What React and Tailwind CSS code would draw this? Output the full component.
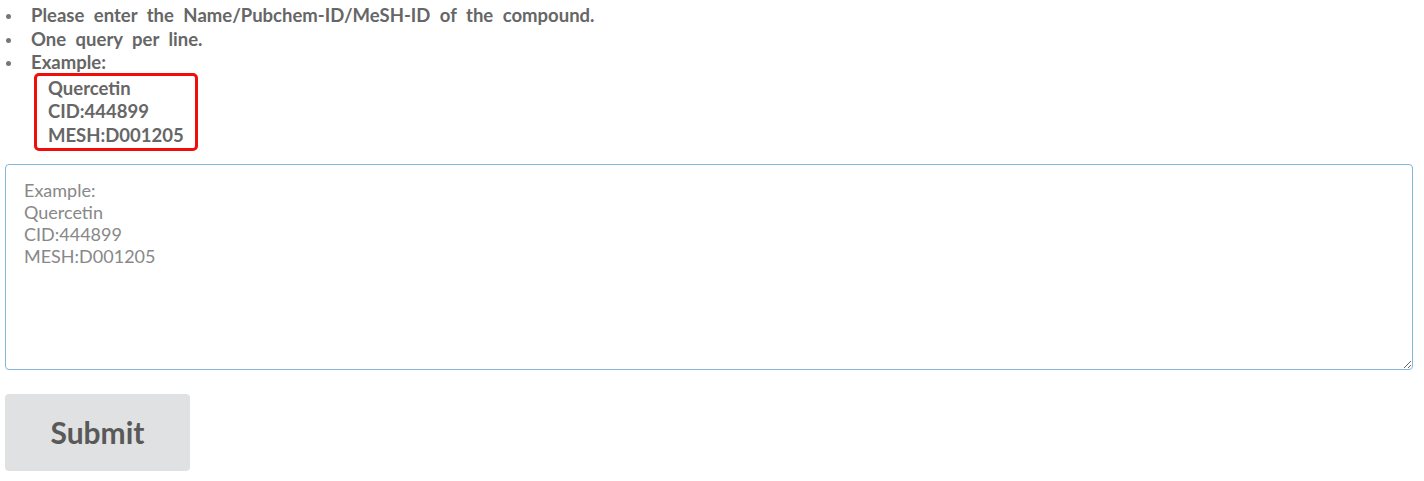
import React from "react";

const Bullet = ({ children }) => (
  <li className="flex">
    <span className="mr-[20px] mt-[10px] h-[5px] w-[5px] shrink-0 rounded-full bg-[#777]" />
    <div>{children}</div>
  </li>
);

const App = () => {
  return (
    <div className="min-h-screen bg-white pl-[5px] pr-[11px] font-['Lato','Liberation_Sans',sans-serif]">
      {/* Instructions */}
      <ul className="pl-[1px] pt-[4px] text-[18.5px] font-bold leading-[23.5px] text-[#666]">
        <Bullet>
          <span className="[word-spacing:5px]">Please enter the Name/Pubchem-ID/MeSH-ID of the compound.</span>
        </Bullet>
        <Bullet>
          <span className="[word-spacing:5px]">One query per line.</span>
        </Bullet>
        <Bullet>
          Example:
          <div className="-mt-[2px] ml-[3px] w-[164px] rounded-[5px] border-[3px] border-[#f20d0d] px-[11px] py-[1px] leading-[23.5px]">
            Quercetin
            <br />
            CID:444899
            <br />
            MESH:D001205
          </div>
        </Bullet>
      </ul>

      {/* Query box */}
      <textarea
        className="mt-[13px] block h-[206px] w-full resize-y rounded-[4px] border border-[#85b7d9] px-[18px] py-[14px] text-[18px] leading-[22px] text-[#333] outline-none placeholder:text-[#888]"
        placeholder={"Example:\nQuercetin\nCID:444899\nMESH:D001205"}
      />

      <button className="mt-[24px] h-[77px] w-[185px] rounded-[4px] bg-[#e0e1e2] text-[30px] font-bold text-[#595959]">
        Submit
      </button>
    </div>
  );
};

export default App;
